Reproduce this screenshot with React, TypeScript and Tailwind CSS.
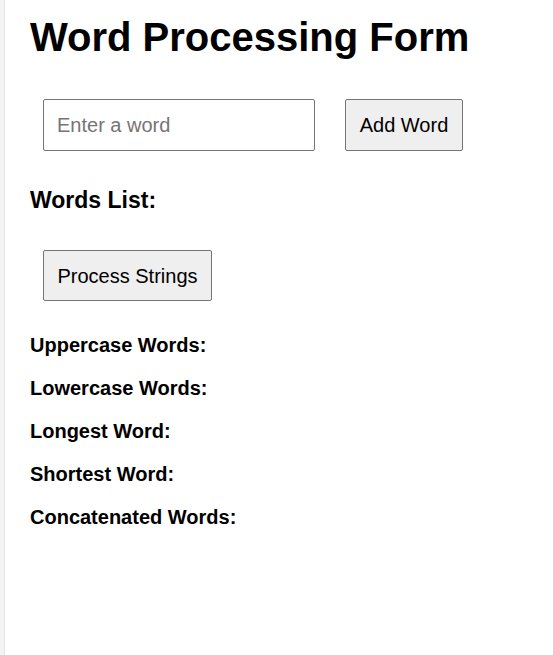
export default function App() {
  const labels = [
    'Uppercase Words:',
    'Lowercase Words:',
    'Longest Word:',
    'Shortest Word:',
    'Concatenated Words:',
  ];

  return (
    <div
      className="flex min-h-[655px] bg-white text-black"
      style={{ fontFamily: '"Liberation Sans", Arial, sans-serif' }}
    >
      <div className="w-[5px] shrink-0 border-r border-[#e4e4e4] bg-[#f4f4f4]" />
      <div className="flex-1 pl-[25px]">
        <h1 className="mt-[14px] text-[40px] leading-[46px] font-bold">
          Word Processing Form
        </h1>

        <div className="mt-[39px] flex items-center gap-[30px] pl-[13px]">
          <input
            type="text"
            placeholder="Enter a word"
            className="h-[52px] w-[272px] rounded-[2px] border border-[#767676] px-[13px] text-[20px] placeholder:text-[#757575]"
          />
          <button
            type="button"
            className="h-[52px] w-[118px] rounded-[2px] border border-[#767676] bg-[#efefef] text-[20px]"
          >
            Add Word
          </button>
        </div>

        <h2 className="mt-[36px] text-[23px] leading-[27px] font-bold">Words List:</h2>

        <div className="mt-[36px] pl-[13px]">
          <button
            type="button"
            className="h-[51px] w-[169px] rounded-[2px] border border-[#767676] bg-[#efefef] text-[20px]"
          >
            Process Strings
          </button>
        </div>

        <div className="mt-[33px] flex flex-col gap-[20px]">
          {labels.map((l) => (
            <h3 key={l} className="text-[20px] leading-[23px] font-bold">
              {l}
            </h3>
          ))}
        </div>
      </div>
    </div>
  );
}
